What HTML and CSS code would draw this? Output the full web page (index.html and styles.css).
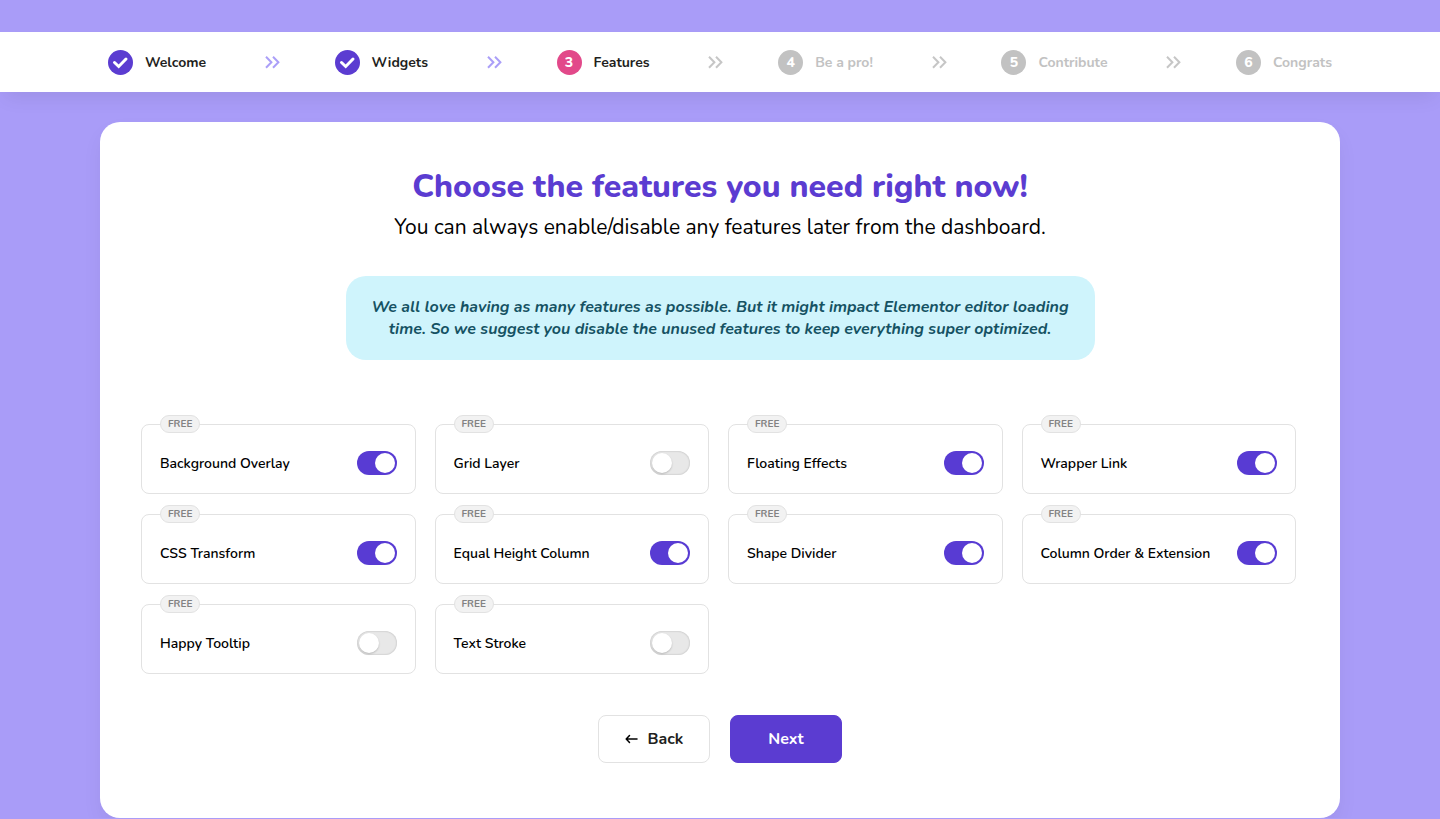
FILE: index.html
```html
<!DOCTYPE html>
<html lang="en">
<head>
<meta charset="utf-8">
<meta name="viewport" content="width=device-width, initial-scale=1">
<title>Choose features</title>
<link rel="stylesheet" href="styles.css">
</head>
<body>
<svg class="sprite" aria-hidden="true">
  <symbol id="check" viewBox="0 0 25 25"><path d="M6.500 12.500l4.200 4L18 9" fill="none" stroke="currentColor" stroke-width="3" stroke-linecap="round" stroke-linejoin="miter"/></symbol>
  <symbol id="chevrons" viewBox="0 0 15 14"><path d="M1 1.700L6.400 7.200L1 12.700M8 1.700L13.400 7.200L8 12.700" fill="none" stroke="currentColor" stroke-width="2"/></symbol>
</svg>
<nav class="steps" aria-label="Setup steps">
  <ol class="steps-list">
    <li class="step done"><span class="dot"><svg><use href="#check"/></svg></span>Welcome</li>
    <li class="sep done" aria-hidden="true"><svg><use href="#chevrons"/></svg></li>
    <li class="step done"><span class="dot"><svg><use href="#check"/></svg></span>Widgets</li>
    <li class="sep done" aria-hidden="true"><svg><use href="#chevrons"/></svg></li>
    <li class="step current" aria-current="step"><span class="dot">3</span>Features</li>
    <li class="sep" aria-hidden="true"><svg><use href="#chevrons"/></svg></li>
    <li class="step"><span class="dot">4</span>Be a pro!</li>
    <li class="sep" aria-hidden="true"><svg><use href="#chevrons"/></svg></li>
    <li class="step"><span class="dot">5</span>Contribute</li>
    <li class="sep" aria-hidden="true"><svg><use href="#chevrons"/></svg></li>
    <li class="step"><span class="dot">6</span>Congrats</li>
  </ol>
</nav>
<main class="panel">
  <h1>Choose the features you need right now!</h1>
  <p class="lead">You can always enable/disable any features later from the dashboard.</p>
  <p class="notice">We all love having as many features as possible. But it might impact Elementor editor loading time. So we suggest you disable the unused features to keep everything super optimized.</p>
  <div class="features">
    <div class="card"><span class="badge">FREE</span><label for="f1">Background Overlay</label><input class="toggle" type="checkbox" id="f1" checked></div>
    <div class="card"><span class="badge">FREE</span><label for="f2">Grid Layer</label><input class="toggle" type="checkbox" id="f2"></div>
    <div class="card"><span class="badge">FREE</span><label for="f3">Floating Effects</label><input class="toggle" type="checkbox" id="f3" checked></div>
    <div class="card"><span class="badge">FREE</span><label for="f4">Wrapper Link</label><input class="toggle" type="checkbox" id="f4" checked></div>
    <div class="card"><span class="badge">FREE</span><label for="f5">CSS Transform</label><input class="toggle" type="checkbox" id="f5" checked></div>
    <div class="card"><span class="badge">FREE</span><label for="f6">Equal Height Column</label><input class="toggle" type="checkbox" id="f6" checked></div>
    <div class="card"><span class="badge">FREE</span><label for="f7">Shape Divider</label><input class="toggle" type="checkbox" id="f7" checked></div>
    <div class="card"><span class="badge">FREE</span><label for="f8">Column Order &amp; Extension</label><input class="toggle" type="checkbox" id="f8" checked></div>
    <div class="card"><span class="badge">FREE</span><label for="f9">Happy Tooltip</label><input class="toggle" type="checkbox" id="f9"></div>
    <div class="card"><span class="badge">FREE</span><label for="f10">Text Stroke</label><input class="toggle" type="checkbox" id="f10"></div>
  </div>
  <div class="actions">
    <button class="btn back" type="button"><svg viewBox="0 0 13 10" aria-hidden="true"><path d="M12 5H1.500M4.500 1.500L1.200 5L4.500 8.500" fill="none" stroke="currentColor" stroke-width="1.500" stroke-linecap="round" stroke-linejoin="round"/></svg>Back</button>
    <button class="btn next" type="button">Next</button>
  </div>
</main>
</body>
</html>
```
FILE: styles.css
```css
* { box-sizing: border-box; }
body {
  margin: 0;
  padding-top: 32px;
  background: #a99cf8;
  color: #000;
  font-family: Nunito, "Open Sans", sans-serif;
}
.sprite { display: none; }

.steps {
  background: #fff;
  box-shadow: 0 10px 20px -5px rgba(0, 0, 0, 0.08);
}
.steps-list {
  display: flex;
  align-items: center;
  justify-content: space-between;
  height: 60px;
  max-width: 1240px;
  margin: 0 auto;
  padding: 0 8px;
  list-style: none;
}
.step {
  display: flex;
  align-items: center;
  gap: 12px;
  color: #c2c2c2;
  font-size: 14px;
  font-weight: 700;
  line-height: 21px;
}
.step.done, .step.current { color: #1f1f21; }
.dot {
  display: flex;
  align-items: center;
  justify-content: center;
  width: 25px;
  height: 25px;
  border-radius: 50%;
  background: #c2c2c2;
  color: #fff;
  font-weight: 800;
}
.done .dot { background: #5b3cd1; }
.current .dot { background: #e2498a; }
.dot svg { width: 25px; height: 25px; }
.sep { padding-left: 4px; color: #c6c6c6; }
.sep.done { color: #ab9ff8; }
.sep svg { display: block; width: 15px; height: 14px; }

.panel {
  max-width: 1240px;
  margin: 30px auto 0;
  padding: 45px 41px 55px;
  border-radius: 20px;
  background: #fff;
  box-shadow: 0 10px 20px rgba(0, 0, 0, 0.05);
  text-align: center;
}
h1 {
  margin: 0;
  color: #5b3cd1;
  font-size: 32px;
  font-weight: 800;
  line-height: 40px;
}
.lead {
  margin: 5px 0 0;
  font-size: 21px;
  line-height: 30px;
}
.notice {
  max-width: 749px;
  margin: 34px auto 0;
  padding: 20px 24px;
  border-radius: 20px;
  background: #cff4fc;
  color: #155263;
  font-size: 16px;
  font-style: italic;
  font-weight: 700;
  line-height: 22px;
}

.features {
  display: grid;
  grid-template-columns: repeat(4, 1fr);
  gap: 20px 19px;
  margin-top: 64px;
  padding-right: 3px;
  text-align: left;
}
.card {
  position: relative;
  display: flex;
  align-items: center;
  justify-content: space-between;
  padding: 26px 18px 18px;
  border: 1px solid #e2e2e2;
  border-radius: 8px;
  font-size: 14px;
  font-weight: 600;
  line-height: 21px;
}
.badge {
  position: absolute;
  top: -10px;
  left: 18px;
  padding: 0 7px;
  border: 1px solid #e2e2e2;
  border-radius: 9px;
  background: #f2f2f2;
  color: #828282;
  font-size: 10px;
  font-weight: 700;
  line-height: 16px;
}
.toggle {
  appearance: none;
  width: 40px;
  height: 24px;
  margin: 0;
  padding: 2px;
  border-radius: 12px;
  background: #e8e8e8;
  box-shadow: inset 0 0 2px rgba(0, 0, 0, 0.25);
}
.toggle::before {
  content: "";
  display: block;
  width: 20px;
  height: 20px;
  border-radius: 50%;
  background: #fff;
  box-shadow: 0 1px 2px rgba(0, 0, 0, 0.2);
}
.toggle:checked { background: #583bd3; box-shadow: none; }
.toggle:checked::before { margin-left: auto; box-shadow: none; }

.actions {
  display: flex;
  justify-content: center;
  gap: 20px;
  margin-top: 41px;
}
.btn {
  display: flex;
  align-items: center;
  justify-content: center;
  gap: 10px;
  width: 112px;
  height: 48px;
  padding: 0;
  border: 1px solid #5b3cd1;
  border-radius: 8px;
  background: #5b3cd1;
  color: #fff;
  font: inherit;
  font-size: 16px;
  font-weight: 700;
}
.btn.back { border-color: #e2e2e2; background: #fff; color: #1f1f21; }
.btn svg { width: 13px; height: 10px; color: #000; }
```
